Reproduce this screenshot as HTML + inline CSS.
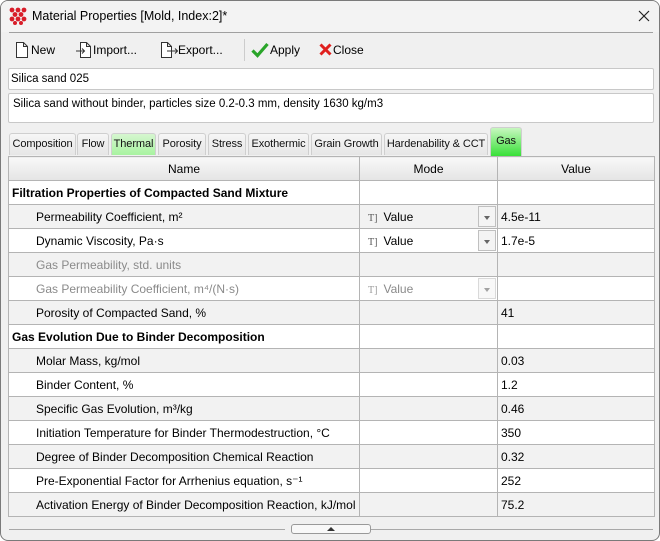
<!DOCTYPE html>
<html><head><meta charset="utf-8"><style>
*{box-sizing:border-box;margin:0;padding:0}
body{width:660px;height:541px;background:#fff;font-family:"Liberation Sans",sans-serif;font-size:12px;color:#000;overflow:hidden;position:relative}
.win{position:absolute;left:0;top:0;width:660px;height:541px;border:1px solid #7a7a7a;border-radius:8px;background:#f0f0f0;overflow:hidden}
.abs{position:absolute}
.title{left:0;top:0;width:658px;height:31px;background:#f3f3f3}
.sep{left:8px;top:31px;width:644px;height:1px;background:#a0a0a0}
.tb{top:42px;font-size:12px;white-space:nowrap}
.field{left:7px;width:646px;background:#fff;border:1px solid #c8c8c8;border-radius:2px;padding:4px 2px;font-size:11.5px}
.tab{top:132px;height:22px;border:1px solid #cfcfcf;border-bottom:none;border-radius:3px 3px 0 0;background:linear-gradient(#f6f6f6,#e6e6e6);font-size:11px;text-align:center;line-height:21px;white-space:nowrap;color:#111;letter-spacing:-0.1px}
table{position:absolute;left:7px;top:155px;border-collapse:collapse;width:646px;background:#fff;table-layout:fixed}
td,th{height:24px;border:1px solid #b4b4b4;padding:0 3px;font-size:12px;white-space:nowrap;overflow:hidden;font-weight:normal;text-align:left}
th{background:linear-gradient(#f8f8f8,#e4e4e4);text-align:center;height:24px}
tr.s td{background:#f2f2f2}
td.i{padding-left:27px}
td.b{font-weight:bold}
.g{color:#8a8a8a}
.mode{position:relative}
.mode .t{font-family:"Liberation Serif",serif;font-size:10px;color:#555;margin-right:6px;margin-left:5px}
.dd{position:absolute;right:1px;top:1px;width:18px;height:21px;border:1px solid #c0c0c0;background:#f4f4f4}
.dd:after{content:"";position:absolute;left:5px;top:9px;border-left:3px solid transparent;border-right:3px solid transparent;border-top:4px solid #666}
</style></head><body>
<div class="win">
<div class="abs title"></div>
<svg class="abs" style="left:8px;top:6px" width="18" height="18" viewBox="0 0 18 18">
<g fill="#d81e2a"><circle cx="3" cy="3" r="2.4"/><circle cx="9" cy="3" r="2.4"/><circle cx="15" cy="3" r="2.4"/><circle cx="6" cy="7.5" r="2.4"/><circle cx="12" cy="7.5" r="2.4"/><circle cx="3" cy="12" r="2.4"/><circle cx="9" cy="12" r="2.4"/><circle cx="15" cy="12" r="2.4"/><circle cx="6" cy="16" r="2"/><circle cx="12" cy="16" r="2"/></g></svg>
<div class="abs" style="left:31px;top:8px;font-size:12.5px">Material Properties [Mold, Index:2]*</div>
<svg class="abs" style="left:637px;top:9px" width="12" height="12" viewBox="0 0 12 12"><path d="M1 1l10 10M11 1L1 11" stroke="#222" stroke-width="1.2"/></svg>
<div class="abs sep"></div>

<svg class="abs" style="left:14px;top:40px" width="14" height="18" viewBox="0 0 14 18"><path d="M1.5 1.5h7l4 4v11h-11z M8.5 1.5v4h4" fill="#fff" stroke="#333"/></svg>
<div class="abs tb" style="left:30px">New</div>
<svg class="abs" style="left:75px;top:40px" width="16" height="18" viewBox="0 0 16 18"><path d="M4.5 1.5h6l4 4v11h-10z M10.5 1.5v4h4" fill="#fff" stroke="#333"/><path d="M0 10h8M6 7.5l2.5 2.5-2.5 2.5" fill="none" stroke="#333"/></svg>
<div class="abs tb" style="left:92px">Import...</div>
<svg class="abs" style="left:159px;top:40px" width="18" height="18" viewBox="0 0 18 18"><path d="M1.5 1.5h6l4 4v11h-10z M7.5 1.5v4h4" fill="#fff" stroke="#333"/><path d="M7 10h10M15 7.5l2.5 2.5-2.5 2.5" fill="none" stroke="#333"/></svg>
<div class="abs tb" style="left:177px">Export...</div>
<div class="abs" style="left:243px;top:38px;width:1px;height:22px;background:#ccc"></div>
<svg class="abs" style="left:250px;top:41px" width="18" height="16" viewBox="0 0 18 16"><path d="M1.5 8.5l5 5L16.5 2" fill="none" stroke="#2aa52a" stroke-width="3.2"/></svg>
<div class="abs tb" style="left:269px">Apply</div>
<svg class="abs" style="left:318px;top:42px" width="13" height="13" viewBox="0 0 13 13"><path d="M1.5 1.5l10 10M11.5 1.5l-10 10" stroke="#e0201e" stroke-width="3"/></svg>
<div class="abs tb" style="left:332px">Close</div>

<div class="abs field" style="top:67px;height:22px">Silica sand 025</div>
<div class="abs field" style="top:92px;height:30px;padding-left:4px">Silica sand without binder, particles size 0.2-0.3 mm, density 1630 kg/m3</div>

<div class="abs tab" style="left:8px;width:67px">Composition</div>
<div class="abs tab" style="left:76px;width:32px">Flow</div>
<div class="abs tab" style="left:110px;width:45px;background:linear-gradient(#d6f6d0,#a8f3a0)">Thermal</div>
<div class="abs tab" style="left:157px;width:48px">Porosity</div>
<div class="abs tab" style="left:207px;width:38px">Stress</div>
<div class="abs tab" style="left:247px;width:61px">Exothermic</div>
<div class="abs tab" style="left:310px;width:71px">Grain Growth</div>
<div class="abs tab" style="left:383px;width:104px">Hardenability &amp; CCT</div>
<div class="abs tab" style="left:489px;width:32px;top:126px;height:29px;line-height:26px;background:linear-gradient(#c8f7c0,#38e038)">Gas</div>

<table>
<colgroup><col style="width:351px"><col style="width:138px"><col style="width:157px"></colgroup>
<tr><th>Name</th><th>Mode</th><th>Value</th></tr>
<tr><td class="b">Filtration Properties of Compacted Sand Mixture</td><td></td><td></td></tr>
<tr class="s"><td class="i">Permeability Coefficient, m²</td><td class="mode"><span class="t">T]</span>Value<span class="dd"></span></td><td>4.5e-11</td></tr>
<tr><td class="i">Dynamic Viscosity, Pa·s</td><td class="mode"><span class="t">T]</span>Value<span class="dd"></span></td><td>1.7e-5</td></tr>
<tr class="s"><td class="i g">Gas Permeability, std. units</td><td></td><td></td></tr>
<tr><td class="i g">Gas Permeability Coefficient, m⁴/(N·s)</td><td class="mode g"><span class="t" style="color:#999">T]</span>Value<span class="dd" style="opacity:.6"></span></td><td></td></tr>
<tr class="s"><td class="i">Porosity of Compacted Sand, %</td><td></td><td>41</td></tr>
<tr><td class="b">Gas Evolution Due to Binder Decomposition</td><td></td><td></td></tr>
<tr class="s"><td class="i">Molar Mass, kg/mol</td><td></td><td>0.03</td></tr>
<tr><td class="i">Binder Content, %</td><td></td><td>1.2</td></tr>
<tr class="s"><td class="i">Specific Gas Evolution, m³/kg</td><td></td><td>0.46</td></tr>
<tr><td class="i">Initiation Temperature for Binder Thermodestruction, °C</td><td></td><td>350</td></tr>
<tr class="s"><td class="i">Degree of Binder Decomposition Chemical Reaction</td><td></td><td>0.32</td></tr>
<tr><td class="i">Pre-Exponential Factor for Arrhenius equation, s⁻¹</td><td></td><td>252</td></tr>
<tr class="s"><td class="i">Activation Energy of Binder Decomposition Reaction, kJ/mol</td><td></td><td>75.2</td></tr>
</table>

<div class="abs" style="left:8px;top:528px;width:276px;height:1px;background:#a8a8a8"></div>
<div class="abs" style="left:297px;top:528px;width:355px;height:1px;background:#a8a8a8"></div>
<div class="abs" style="left:290px;top:523px;width:80px;height:10px;border:1px solid #999;border-radius:3px;background:#f8f8f8"></div>
<div class="abs" style="left:326px;top:526px;border-left:4px solid transparent;border-right:4px solid transparent;border-bottom:4px solid #333"></div>
</div>
</body></html>
